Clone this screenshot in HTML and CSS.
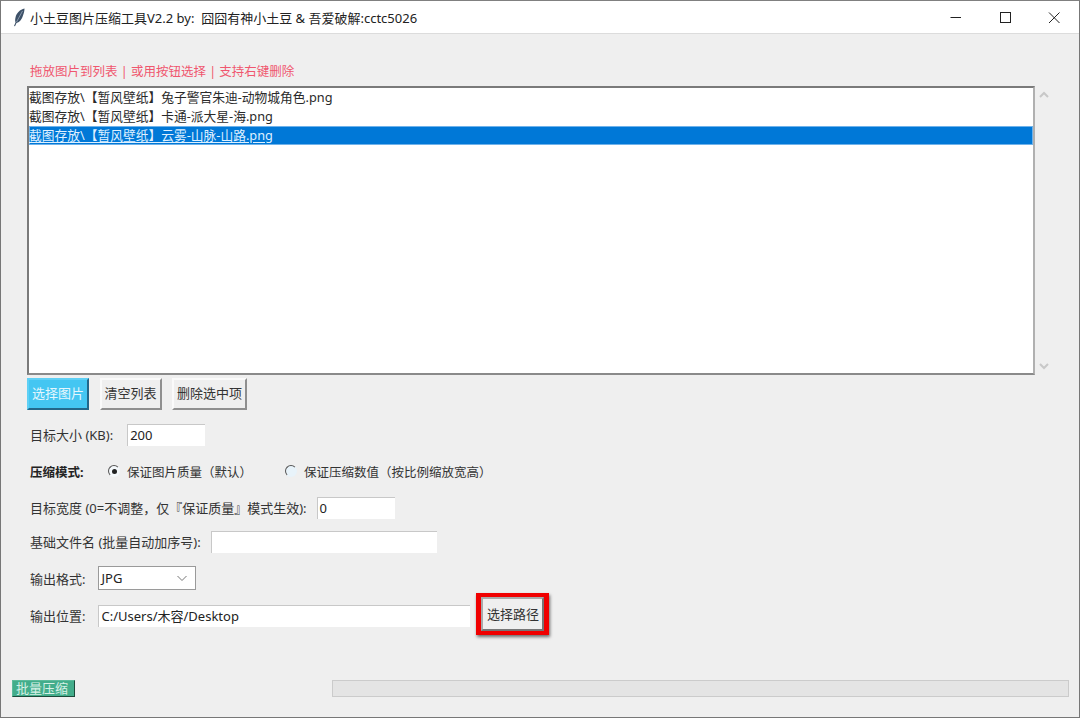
FILE: index.html
```html
<!DOCTYPE html>
<html lang="zh">
<head>
<meta charset="utf-8">
<title>小土豆图片压缩工具</title>
<link rel="stylesheet" href="styles.css">
</head>
<body>
<div class="window">
  <header class="titlebar">
    <svg class="feather" width="16" height="20" viewBox="0 0 16 20"><path d="M13.500 1.500C9 2.500 5.500 6 4.500 10.500C4 12.500 4 14 4.500 15.500L3 19L4 19.200L5.500 16C9 15 11 12 12 8.500C13 5.500 13.500 3.500 13.500 1.500Z" fill="#3d5168"/><path d="M11.500 4L5.500 15" stroke="#a9b8c8" stroke-width=".7"/></svg>
    <span class="title">小土豆图片压缩工具V2.2 by:&nbsp; 囧囧有神小土豆 &amp; 吾爱破解:cctc5026</span>
    <div class="controls">
      <svg class="ctl" width="46" height="33" viewBox="0 0 46 33"><path d="M17.500 16.500H28" stroke="#222" fill="none"/></svg>
      <svg class="ctl" width="46" height="33" viewBox="0 0 46 33"><rect x="18.500" y="11.500" width="10" height="10" stroke="#222" fill="none"/></svg>
      <svg class="ctl" width="46" height="33" viewBox="0 0 46 33"><path d="M18 11.500L28.500 22M28.500 11.500L18 22" stroke="#222" fill="none"/></svg>
    </div>
  </header>
  <main class="content">
    <p class="hint">拖放图片到列表 | 或用按钮选择 | 支持右键删除</p>
    <section class="listwrap">
      <ul class="list">
        <li>截图存放\【暂风壁纸】兔子警官朱迪-动物城角色.png</li>
        <li>截图存放\【暂风壁纸】卡通-派大星-海.png</li>
        <li class="selected"><span>截图存放\【暂风壁纸】云雾-山脉-山路.png</span></li>
      </ul>
      <div class="scrollbar">
        <svg width="10" height="7" viewBox="0 0 10 7"><path d="M1 6L5 2L9 6" stroke="#c8c8c8" stroke-width="2" fill="none"/></svg>
        <svg width="10" height="7" viewBox="0 0 10 7"><path d="M1 1L5 5L9 1" stroke="#c8c8c8" stroke-width="2" fill="none"/></svg>
      </div>
    </section>
    <div class="buttons">
      <button class="btn btn-blue">选择图片</button>
      <button class="btn">清空列表</button>
      <button class="btn btn-wide">删除选中项</button>
    </div>
    <div class="row row-size">
      <label>目标大小 (KB):</label>
      <span class="input input-s">200</span>
    </div>
    <div class="row row-mode">
      <strong class="mode-label">压缩模式:</strong>
      <span class="radio on"></span><span class="radio-text">保证图片质量（默认）</span>
      <span class="radio off"></span><span class="radio-text-last">保证压缩数值（按比例缩放宽高）</span>
    </div>
    <div class="row row-width">
      <label>目标宽度 (0=不调整，仅『保证质量』模式生效):</label>
      <span class="input input-s2">0</span>
    </div>
    <div class="row row-name">
      <label>基础文件名 (批量自动加序号):</label>
      <span class="input input-m"></span>
    </div>
    <div class="row row-format">
      <label>输出格式:</label>
      <span class="select">JPG
        <svg width="12" height="7" viewBox="0 0 12 7"><path d="M1.500 1L6 5.500L10.500 1" stroke="#777" fill="none"/></svg>
      </span>
    </div>
    <div class="row row-output">
      <label>输出位置:</label>
      <span class="input input-l">C:/Users/木容/Desktop</span>
      <span class="redbox"><button class="btn btn-path">选择路径</button></span>
    </div>
    <div class="footer">
      <button class="btn-green">批量压缩</button>
      <div class="progress"></div>
    </div>
  </main>
</div>
</body>
</html>
```
FILE: styles.css
```css
* { box-sizing: border-box; }
html, body { margin: 0; height: 100%; }
body {
  font-family: "Noto Sans", "Noto Sans CJK SC", sans-serif;
  font-size: 13px;
  color: #333;
  background: #efefef;
  overflow: hidden;
}
.window {
  width: 1080px;
  height: 718px;
  border: 1px solid #777;
  border-top-color: #808080;
  display: flex;
  flex-direction: column;
  background: #efefef;
}
.titlebar {
  height: 33px;
  flex: none;
  background: #fff;
  border-bottom: 1px solid #dcdcdc;
  display: flex;
  align-items: center;
  padding-left: 10px;
}
.feather { flex: none; margin-right: 3px; }
.title { font-size: 13px; color: #222; }
.controls { margin-left: auto; display: flex; margin-right: 2px; }
.ctl { display: block; }
.controls .ctl:nth-child(1) { margin-right: 3px; }
.controls .ctl:nth-child(2) { margin-right: 3px; }
.content {
  flex: 1;
  display: flex;
  flex-direction: column;
  padding: 28px 0 0 26px;
  min-height: 0;
}
.hint {
  margin: 0;
  height: 24px;
  padding-left: 3px;
  line-height: 20px;
  font-size: 12.500px;
  color: #f0566e;
}
.listwrap { display: flex; height: 289px; flex: none; }
.list {
  list-style: none;
  margin: 0;
  padding: 0;
  width: 1008px;
  height: 289px;
  background: #fff;
  border-top: 2px solid #7a7a7a;
  border-left: 2px solid #7a7a7a;
  border-right: 2px solid #b0b0b0;
  border-bottom: 2px solid #8a8a8a;
  font-size: 12.750px;
  color: #2a2a2a;
}
.list li { height: 18.800px; line-height: 19px; white-space: nowrap; }
.list .selected {
  height: 19.500px;
  background: #0078d7;
  color: #dff0ff;
  box-shadow: inset 0 0 0 1px #6fb2ea;
}
.list .selected span { text-decoration: underline; text-underline-offset: 2px; }
.scrollbar {
  flex: none;
  width: 18px;
  padding: 5px 0 5px 0;
  display: flex;
  flex-direction: column;
  justify-content: space-between;
  align-items: center;
}
.buttons { display: flex; margin-top: 3px; height: 34px; flex: none; }
.btn {
  font: inherit;
  height: 32px;
  width: 62px;
  padding: 0 0 3px;
  margin-right: 10.500px;
  background: #efefef;
  color: #333;
  border: 2px solid;
  border-color: #fafafa #8f8f8f #8f8f8f #fafafa;
  outline: none;
}
.btn-wide { width: 75px; margin-right: 0; }
.btn-blue {
  background: #44c6f2;
  color: #e4f6fd;
  border-color: #5fd0f5 #23678a #23678a #5fd0f5;
}
.row { display: flex; align-items: center; flex: none; padding-left: 3px; }
.row label { white-space: nowrap; }
.input {
  display: block;
  height: 22px;
  line-height: 21px;
  background: #fff;
  border-top: 1px solid #c8c8c8;
  border-left: 1px solid #c8c8c8;
  padding-left: 2px;
  font-size: 13px;
  color: #222;
}
.row-size { margin-top: 11px; height: 23px; }
.row-size .input { margin-left: 14px; }
.input-s { width: 78px; }
.row-mode { margin-top: 14px; height: 22px; font-size: 12.500px; }
.mode-label { font-weight: 700; width: 78px; color: #222; }
.radio {
  position: relative;
  width: 12px;
  height: 12px;
  border-radius: 50%;
  background: #f4f8fb;
  border: 1px solid transparent;
  border-top-color: #555;
  border-left-color: #555;
  flex: none;
  margin-right: 7px;
}
.radio.on::after {
  content: "";
  position: absolute;
  left: 2.500px;
  top: 2.500px;
  width: 5px;
  height: 5px;
  border-radius: 50%;
  background: #222;
}
.radio.off { background: #e8f3fa; }
.radio-text { width: 158px; }
.radio-text-last { white-space: nowrap; }
.row-width { margin-top: 14px; height: 23px; }
.row-width .input { margin-left: 10px; }
.input-s2 { width: 78px; }
.row-name { margin-top: 11px; height: 23px; }
.row-name .input { margin-left: 10px; }
.input-m { width: 226px; }
.row-format { margin-top: 13px; height: 24px; }
.select {
  display: flex;
  align-items: center;
  justify-content: space-between;
  width: 98px;
  height: 24px;
  margin-left: 13px;
  padding: 0 7px 0 2px;
  background: #fff;
  border: 1px solid #9a9a9a;
  font-size: 13px;
  color: #222;
}
.row-output { margin-top: 4px; height: 43px; }
.row-output .input { margin-left: 13px; width: 372px; }
.input-l { margin-right: 6px; }
.redbox {
  display: flex;
  width: 73px;
  height: 42px;
  margin-top: -4px;
  border: 4px solid #f00000;
  border-left-width: 5px;
  border-right-width: 5px;
  box-shadow: 1px 2px 3px rgba(0,0,0,.55);
  align-items: stretch;
}
.btn-path {
  width: 100%;
  height: 100%;
  margin: 0;
  padding-bottom: 1px;
  border-color: #aaa #777 #777 #aaa;
}
.footer {
  margin-top: auto;
  margin-bottom: 20px;
  margin-left: -15px;
  display: flex;
  align-items: center;
  height: 17px;
  flex: none;
}
.btn-green {
  font: inherit;
  width: 63px;
  height: 17px;
  line-height: 13px;
  padding: 0 3px 0 0;
  background: #43ad8b;
  color: #d6f0e6;
  border: 1px solid;
  border-color: #5cbb9b #1d4a3b #1d4a3b #5cbb9b;
  margin-right: 257px;
}
.progress {
  width: 737px;
  height: 17px;
  background: #e4e4e4;
  border: 1px solid #cbcbcb;
}
```
